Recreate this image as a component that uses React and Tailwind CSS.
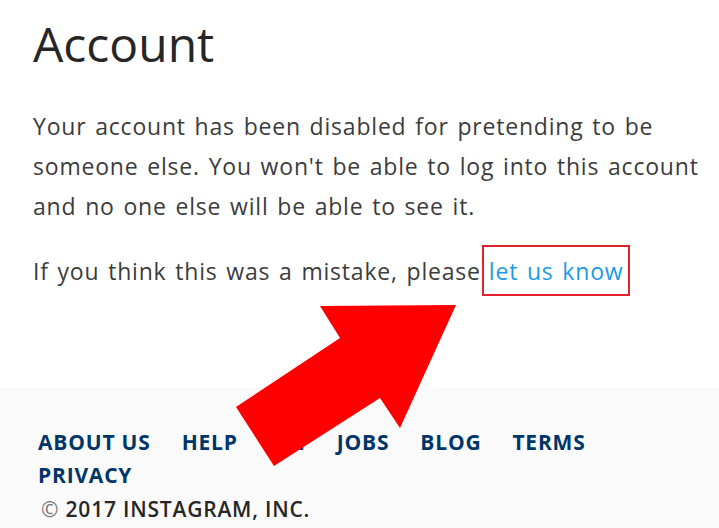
export default function App() {
  const links = ['ABOUT US', 'HELP', 'API', 'JOBS', 'BLOG', 'TERMS', 'PRIVACY']

  return (
    <div className="relative w-[719px] h-[528px] overflow-hidden bg-white font-['Open_Sans',sans-serif]">
      {/* Main content */}
      <main className="h-[388px] pl-[33px] pt-[12px]">
        <h1 className="text-[48px] leading-[64px] font-normal text-[#262626]">
          Account
        </h1>
        <p className="mt-[30px] text-[23px] leading-[40px] text-[#3c3c3c] tracking-[0.8px] [word-spacing:2px]">
          Your account has been disabled for pretending to be
          <br />
          someone else. You won't be able to log into this account
          <br />
          and no one else will be able to see it.
        </p>
        <p className="mt-[19px] text-[23px] leading-[40px] text-[#3c3c3c] tracking-[0.8px] [word-spacing:2px] flex items-center">
          <span>If you think this was a mistake, please</span>
          <span className="ml-[1px] border-2 border-[#e3232b] px-[5px] h-[51px] flex items-center text-[#1a9be6]">
            let us know
          </span>
        </p>
      </main>

      {/* Footer */}
      <footer className="h-[140px] bg-[#fafafa] pl-[38px] pt-[38px]">
        <nav className="flex flex-wrap max-w-[620px] gap-x-[31px] text-[21px] leading-[33px] font-bold text-[#003569] tracking-[0.8px]">
          {links.map((l) => (
            <a key={l}>{l}</a>
          ))}
        </nav>
        <p className="mt-[1px] pl-[3px] text-[21px] leading-[33px] font-semibold text-[#262626] tracking-[0.8px]">
          <span className="font-normal text-[#777]">©</span> 2017 INSTAGRAM, INC.
        </p>
      </footer>

      {/* Red arrow overlay */}
      <svg
        className="absolute inset-0 pointer-events-none"
        width="719"
        height="528"
        viewBox="0 0 719 528"
      >
        <polygon
          points="456,305 320,306 340,338 236,407 274,466 380,398 400,428"
          fill="#ff0000"
        />
      </svg>
    </div>
  )
}
